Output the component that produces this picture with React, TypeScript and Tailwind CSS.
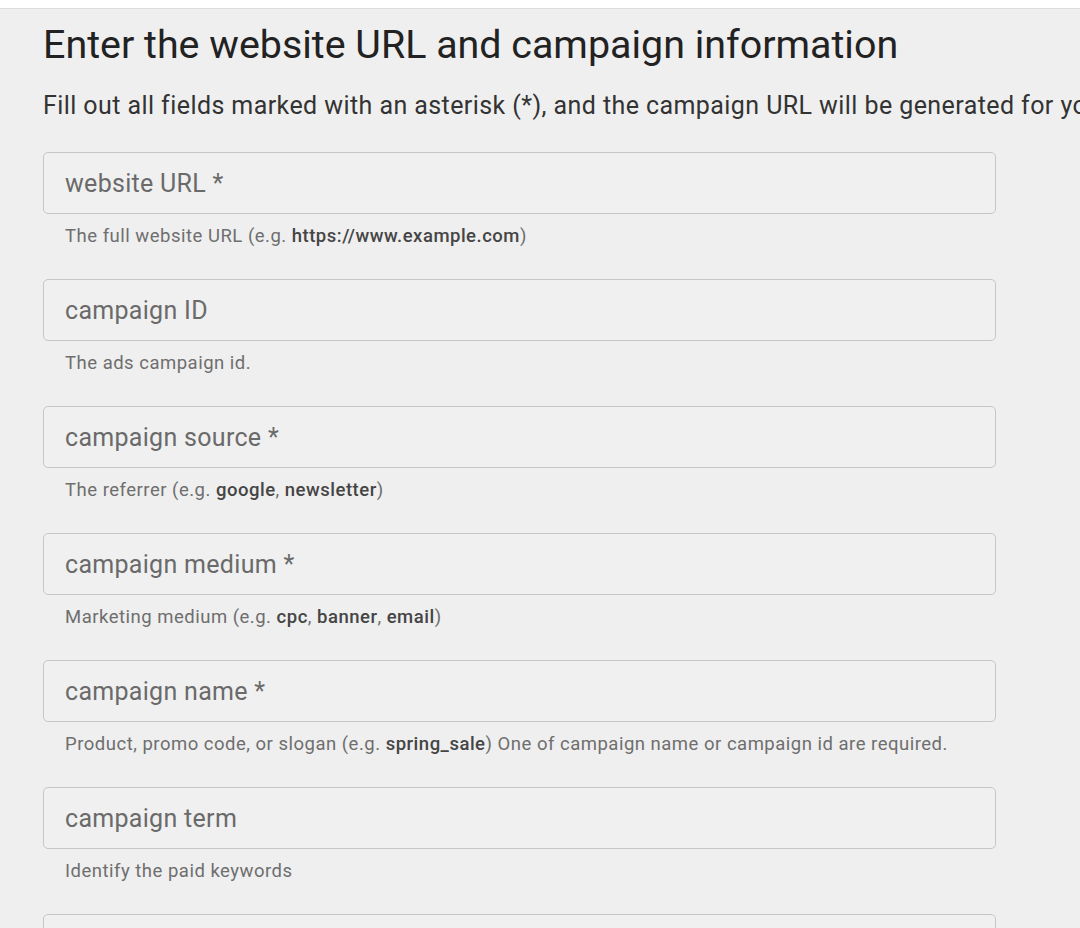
const strong = 'font-medium text-[#454545]'

const fields: { placeholder: string; help: React.ReactNode }[] = [
  {
    placeholder: 'website URL *',
    help: (
      <>
        The full website URL (e.g. <b className={strong}>https://www.example.com</b>)
      </>
    ),
  },
  { placeholder: 'campaign ID', help: 'The ads campaign id.' },
  {
    placeholder: 'campaign source *',
    help: (
      <>
        The referrer (e.g. <b className={strong}>google</b>, <b className={strong}>newsletter</b>)
      </>
    ),
  },
  {
    placeholder: 'campaign medium *',
    help: (
      <>
        Marketing medium (e.g. <b className={strong}>cpc</b>, <b className={strong}>banner</b>,{' '}
        <b className={strong}>email</b>)
      </>
    ),
  },
  {
    placeholder: 'campaign name *',
    help: (
      <>
        Product, promo code, or slogan (e.g. <b className={strong}>spring_sale</b>) One of campaign name or
        campaign id are required.
      </>
    ),
  },
  { placeholder: 'campaign term', help: 'Identify the paid keywords' },
  { placeholder: 'campaign content', help: 'Use to differentiate ads' },
]

export default function App() {
  return (
    <div className="h-[928px] w-[1080px] overflow-hidden bg-[#efefef] font-['Roboto',sans-serif]">
      <div className="h-[9px] border-b border-[#dcdcdc] bg-white" />
      <div className="pl-[43px] pt-[13px]">
        <h1 className="whitespace-nowrap text-[39.4px] leading-[46px] text-[#222]">
          Enter the website URL and campaign information
        </h1>
        <p className="mt-[23px] whitespace-nowrap text-[25px] leading-[30px] tracking-[0.42px] text-[#333]">
          Fill out all fields marked with an asterisk (*), and the campaign URL will be generated for you.
        </p>
        <div className="mt-[31px] flex flex-col">
          {fields.map((f) => (
            <div key={f.placeholder} className="pb-[31px]">
              <input
                type="text"
                placeholder={f.placeholder}
                className="h-[62px] w-[953px] rounded-[5px] border-[1.5px] border-[#c6c6c6] bg-[#f0f0f0] px-[21px] text-[25px] tracking-[0.3px] text-[#333] outline-none placeholder:text-[#6a6a6a]"
              />
              <p className="mt-[10px] whitespace-nowrap pl-[22px] text-[18.5px] leading-[24px] tracking-[0.5px] text-[#6e6e6e]">
                {f.help}
              </p>
            </div>
          ))}
        </div>
      </div>
    </div>
  )
}
